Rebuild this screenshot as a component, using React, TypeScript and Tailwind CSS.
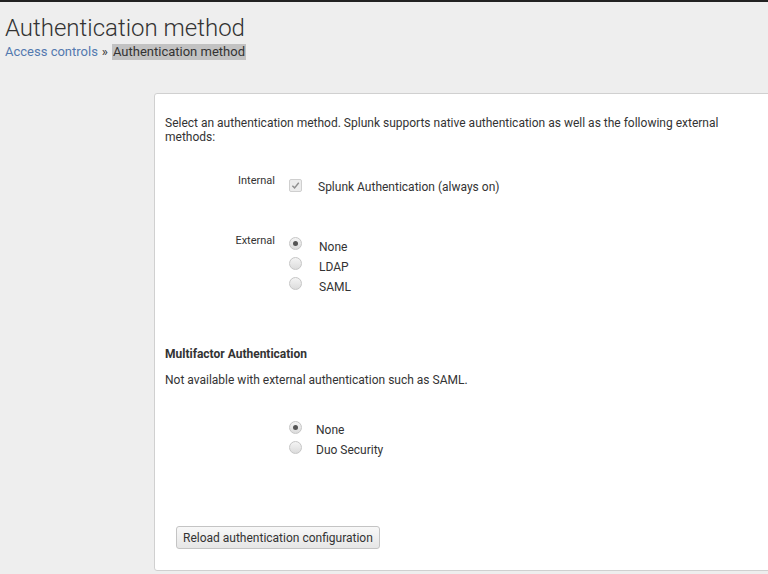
import React from 'react';

const font = { fontFamily: 'Roboto, "Open Sans", "Liberation Sans", sans-serif' };

function Radio({ checked }: { checked?: boolean }) {
  return (
    <span className="flex h-[13px] w-[13px] shrink-0 items-center justify-center rounded-full border border-[#c6c6c6] bg-gradient-to-b from-[#f4f4f4] to-[#dcdcdc]">
      {checked && <span className="h-[5px] w-[5px] rounded-full bg-[#555]" />}
    </span>
  );
}

function Check() {
  return (
    <span className="flex h-[13px] w-[13px] shrink-0 items-center justify-center rounded-[2px] border border-[#cfcfcf] bg-[#ececec]">
      <svg width="9" height="9" viewBox="0 0 10 10" className="block">
        <path d="M1.5 5.2 L4 7.6 L8.6 2" fill="none" stroke="#8f8f8f" strokeWidth="1.6" />
      </svg>
    </span>
  );
}

function Option({ checked, label, textPad = 'pl-[17px]', textTop = 'pt-[3px]' }: { checked?: boolean; label: string; textPad?: string; textTop?: string }) {
  return (
    <div className="flex h-[20px] items-start">
      <Radio checked={checked} />
      <span className={`${textPad} ${textTop} text-[12px] leading-[14px] text-[#333]`}>{label}</span>
    </div>
  );
}

export default function App() {
  return (
    <div style={font} className="h-[574px] w-[768px] overflow-hidden border-t-2 border-[#222] bg-[#eeeeee]">
      {/* header */}
      <div className="pl-[5px] pt-[12px]">
        <h1 className="text-[24px] font-light leading-[28px] text-[#333]">Authentication method</h1>
        <div className="mt-[2px] flex items-center text-[13px] leading-[16px] text-[#333]">
          <span className="text-[#5379af]">Access controls</span>
          <span className="px-[4px]">»</span>
          <span className="bg-[#c2c2c2] px-[1px]">Authentication method</span>
        </div>
      </div>

      {/* panel */}
      <div className="ml-[154px] mt-[33px] h-[478px] w-[640px] rounded-[3px] border border-[#d0d0d0] bg-white pl-[10px] pt-[22px]">
        <p className="w-[570px] text-[12px] leading-[14px] text-[#333]">
          Select an authentication method. Splunk supports native authentication as well as the following external methods:
        </p>

        <div className="mt-[30px] flex h-[20px] items-start">
          <span className="w-[110px] text-right text-[11px] leading-[13px] text-[#333]">Internal</span>
          <span className="ml-[14px] mt-[5px]"><Check /></span>
          <span className="ml-[16px] mt-[6px] text-[12px] leading-[14px] text-[#333]">Splunk Authentication (always on)</span>
        </div>

        <div className="mt-[39px] flex items-start">
          <span className="w-[110px] pt-[1px] text-right text-[11px] leading-[13px] text-[#333]">External</span>
          <div className="ml-[14px] mt-[4px] flex flex-col">
            <Option checked label="None" />
            <Option label="LDAP" />
            <Option label="SAML" />
          </div>
        </div>

        <h3 className="mt-[50px] text-[12px] font-bold leading-[14px] text-[#333]">Multifactor Authentication</h3>
        <p className="mt-[12px] text-[12px] leading-[14px] text-[#333]">Not available with external authentication such as SAML.</p>

        <div className="ml-[124px] mt-[34px] flex flex-col">
          <Option checked label="None" textPad="pl-[14px]" textTop="pt-[2px]" />
          <Option label="Duo Security" textPad="pl-[14px]" textTop="pt-[2px]" />
        </div>

        <button className="ml-[11px] mt-[65px] h-[23px] rounded-[3px] border border-[#c4c4c4] bg-gradient-to-b from-[#f8f8f8] to-[#e6e6e6] px-[6px] text-[12px] leading-[14px] text-[#333]">
          Reload authentication configuration
        </button>
      </div>
    </div>
  );
}
